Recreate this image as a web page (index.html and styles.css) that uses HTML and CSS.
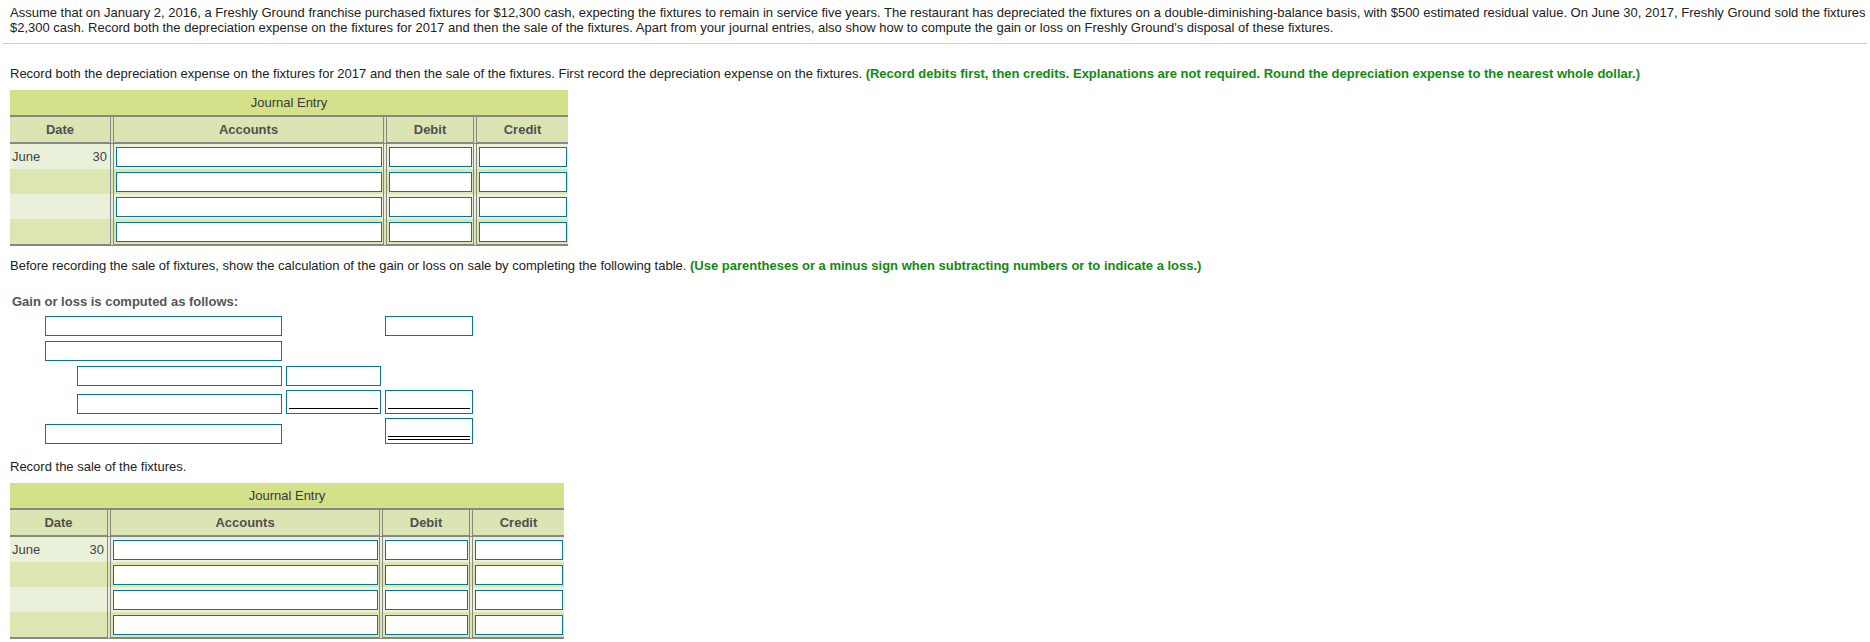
FILE: index.html
```html
<!DOCTYPE html>
<html lang="en">
<head>
    <meta charset="UTF-8">
    <title>Freshly Ground fixtures</title>
<link rel="stylesheet" href="styles.css">
</head>
<body>
    <p class="question">Assume that on January 2, 2016, a Freshly Ground franchise purchased fixtures for $12,300 cash, expecting the fixtures to remain in service five years. The restaurant has depreciated the fixtures on a double-diminishing-balance basis, with $500 estimated residual value. On June 30, 2017, Freshly Ground sold the fixtures $2,300 cash. Record both the depreciation expense on the fixtures for 2017 and then the sale of the fixtures. Apart from your journal entries, also show how to compute the gain or loss on Freshly Ground's disposal of these fixtures.</p>
    <hr class="divider">

    <div class="part">
        <p class="prompt">Record both the depreciation expense on the fixtures for 2017 and then the sale of the fixtures. First record the depreciation expense on the fixtures. <b class="hint">(Record debits first, then credits. Explanations are not required. Round the depreciation expense to the nearest whole dollar.)</b></p>

        <table class="journal journal-one">
            <colgroup>
                <col class="c-date"><col class="c-acc"><col class="c-amt"><col class="c-amt2">
            </colgroup>
            <tr><th class="title" colspan="4">Journal Entry</th></tr>
            <tr class="heads"><th>Date</th><th class="sep">Accounts</th><th class="sep">Debit</th><th class="sep">Credit</th></tr>
            <tr class="light"><td class="date"><span class="day">30</span>June</td><td class="sep"><input></td><td class="sep"><input></td><td class="sep"><input></td></tr>
            <tr class="dark"><td class="date"></td><td class="sep"><input></td><td class="sep"><input></td><td class="sep"><input></td></tr>
            <tr class="light"><td class="date"></td><td class="sep"><input></td><td class="sep"><input></td><td class="sep"><input></td></tr>
            <tr class="dark last"><td class="date"></td><td class="sep"><input></td><td class="sep"><input></td><td class="sep"><input></td></tr>
        </table>

        <p class="prompt before">Before recording the sale of fixtures, show the calculation of the gain or loss on sale by completing the following table. <b class="hint">(Use parentheses or a minus sign when subtracting numbers or to indicate a loss.)</b></p>

        <p class="calc-title">Gain or loss is computed as follows:</p>
        <div class="calc">
            <div class="calc-row"><input class="wide"><span></span><input></div>
            <div class="calc-row"><input class="wide"></div>
            <div class="calc-row"><input class="wide indent"><input></div>
            <div class="calc-row total"><input class="wide indent"><div class="box"><input class="under"></div><div class="box"><input class="under"></div></div>
            <div class="calc-row total"><input class="wide"><span></span><div class="box tall"><input class="under double"></div></div>
        </div>

        <p class="prompt sale">Record the sale of the fixtures.</p>

        <table class="journal journal-two">
            <colgroup>
                <col class="c-date"><col class="c-acc"><col class="c-amt"><col class="c-amt2">
            </colgroup>
            <tr><th class="title" colspan="4">Journal Entry</th></tr>
            <tr class="heads"><th>Date</th><th class="sep">Accounts</th><th class="sep">Debit</th><th class="sep">Credit</th></tr>
            <tr class="light"><td class="date"><span class="day">30</span>June</td><td class="sep"><input></td><td class="sep"><input></td><td class="sep"><input></td></tr>
            <tr class="dark"><td class="date"></td><td class="sep"><input></td><td class="sep"><input></td><td class="sep"><input></td></tr>
            <tr class="light"><td class="date"></td><td class="sep"><input></td><td class="sep"><input></td><td class="sep"><input></td></tr>
            <tr class="dark last"><td class="date"></td><td class="sep"><input></td><td class="sep"><input></td><td class="sep"><input></td></tr>
        </table>
    </div>
</body>
</html>
```

FILE: styles.css
```css
*{
    margin: 0;
    padding: 0;
    box-sizing: border-box;
}
body{
    font-family: "Liberation Sans", Arial, sans-serif;
    font-size: 13px;
    line-height: 15px;
    color: #222;
    background: #fff;
}
input{
    display: block;
    width: 100%;
    height: 20px;
    border: 1px solid #05779a;
    background: #fff;
    font: inherit;
    outline: none;
}

/* question text */
.question{
    padding: 5px 4px 0 10px;
}
.divider{
    border: none;
    border-top: 1px solid #c9cedb;
    margin: 8px 3px 0 3px;
}
.part{
    padding-left: 10px;
}
.prompt{
    margin-top: 22px;
}
.hint{
    color: #118a11;
}
.prompt.before{
    margin-top: 12px;
}
.prompt.sale{
    margin-top: 15px;
}

/* journal tables */
.journal{
    border-collapse: separate;
    border-spacing: 0;
    table-layout: fixed;
    margin-top: 9px;
}
.journal-one{ width: 558px; }
.journal-two{ width: 554px; }
.journal-one .c-date{ width: 100px; }
.journal-one .c-acc{ width: 273px; }
.journal-two .c-date{ width: 97px; }
.journal-two .c-acc{ width: 272px; }
.journal .c-amt{ width: 90px; }
.journal .c-amt2{ width: 95px; }

.journal th{
    height: 27px;
    font-weight: bold;
    color: #505050;
    text-align: center;
    background: #dbe5b3;
    border-bottom: 2px solid #878787;
}
.journal th.title{
    font-weight: normal;
    color: #3a3a3a;
    background: #d5e08a;
}
.journal .sep{
    border-left: 4px double #878787;
}
.journal td{
    height: 25px;
    padding: 3px 1px 2px 2px;
    vertical-align: top;
}
.journal tr.last td{
    height: 27px;
    border-bottom: 2px solid #878787;
}
.journal tr.light td{
    background: #e9f1db;
}
.journal tr.dark td{
    background: #dce6b3;
}
.journal td.date{
    padding: 0 3px 0 2px;
    line-height: 25px;
    color: #444;
}
.day{
    float: right;
}

/* gain or loss calculation */
.calc-title{
    margin-top: 21px;
    padding-left: 2px;
    font-weight: bold;
    color: #555;
}
.calc{
    margin: 7px 0 0 35px;
}
.calc-row{
    display: grid;
    grid-template-columns: 237px 95px 88px;
    column-gap: 4px;
    align-items: end;
    margin-top: 5px;
}
.calc-row:first-child{
    margin-top: 0;
}
.calc-row.total{
    margin-top: 4px;
}
.calc .indent{
    width: 205px;
    margin-left: 32px;
}
.box{
    height: 24px;
    border: 1px solid #05779a;
    padding: 0 2px;
    background: #fff;
}
.box.tall{
    height: 26px;
}
.box input.under{
    height: 18px;
    border: none;
    border-bottom: 1px solid #000;
}
.box.tall input.under{
    height: 21px;
    border-bottom: 4px double #000;
}
```
